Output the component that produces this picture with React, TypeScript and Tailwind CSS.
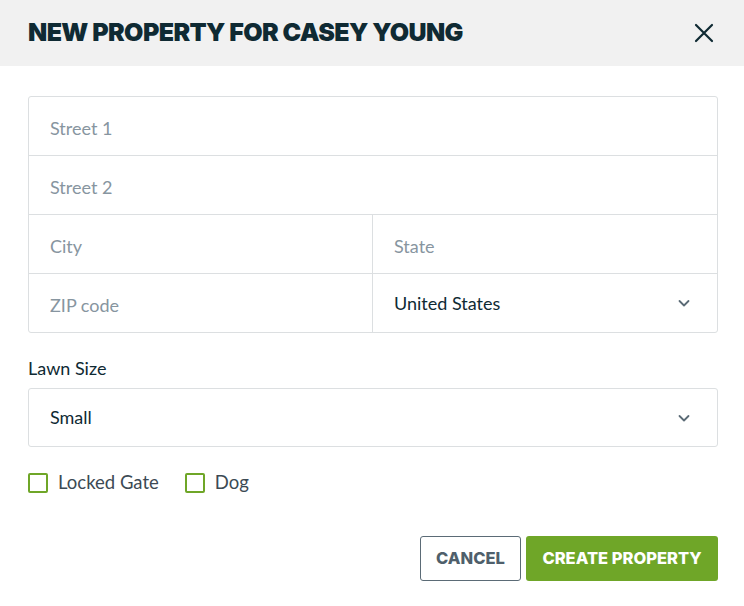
import React, { useState } from 'react';

const body = { fontFamily: 'Lato, "Open Sans", sans-serif' };
const heading = { fontFamily: 'Inter, "Liberation Sans", sans-serif' };

const Chevron = () => (
  <svg width="14" height="14" viewBox="0 0 14 14" fill="none" className="text-[#5b6b76]">
    <path d="M2.5 5l4.5 4.5L11.5 5" stroke="currentColor" strokeWidth="1.8" strokeLinecap="round" strokeLinejoin="round" />
  </svg>
);

const Field = ({ placeholder, className = '' }: { placeholder: string; className?: string }) => (
  <input
    placeholder={placeholder}
    className={`w-full px-[21px] pt-[3px] text-[18px] text-[#0f2a33] placeholder:text-[#8795a0] outline-none bg-transparent ${className}`}
    style={body}
  />
);

const SelectBox = ({ value, className = '' }: { value: string; className?: string }) => (
  <div className={`flex items-center justify-between pl-[21px] pr-[26px] text-[18px] text-[#0f2a33] ${className}`} style={body}>
    <span>{value}</span>
    <Chevron />
  </div>
);

const Check = ({ label }: { label: string }) => {
  const [on, setOn] = useState(false);
  return (
    <label className="flex items-center gap-[10px] cursor-pointer" onClick={() => setOn(!on)}>
      <span className={`w-[20px] h-[20px] rounded-[2px] border-2 border-[#6fa628] ${on ? 'bg-[#6fa628]' : 'bg-white'}`} />
      <span className="text-[18.5px] text-[#3c4a54]" style={body}>{label}</span>
    </label>
  );
};

export default function App() {
  return (
    <div className="w-[744px] h-[606px] bg-white">
      <div className="h-[66px] bg-[#f1f1f1] flex items-center justify-between pl-[28px] pr-[30px]">
        <h1 className="text-[25px] font-black tracking-[-0.6px] text-[#0f2a33]" style={heading}>
          NEW PROPERTY FOR CASEY YOUNG
        </h1>
        <button className="text-[#0f2a33]">
          <svg width="20" height="20" viewBox="0 0 20 20" fill="none">
            <path d="M2 2l16 16M18 2L2 18" stroke="currentColor" strokeWidth="2.2" strokeLinecap="round" />
          </svg>
        </button>
      </div>

      <div className="pl-[28px] pr-[26px] pt-[30px]">
        {/* Address */}
        <div className="border border-[#dcdfe1] rounded-[3px]">
          <Field placeholder="Street 1" className="h-[59px] border-b border-[#dcdfe1]" />
          <Field placeholder="Street 2" className="h-[59px] border-b border-[#dcdfe1]" />
          <div className="grid grid-cols-2">
            <Field placeholder="City" className="h-[59px] border-b border-r border-[#dcdfe1]" />
            <Field placeholder="State" className="h-[59px] border-b border-[#dcdfe1]" />
          </div>
          <div className="grid grid-cols-2">
            <Field placeholder="ZIP code" className="h-[58px] border-r border-[#dcdfe1]" />
            <SelectBox value="United States" className="h-[58px]" />
          </div>
        </div>

        <div className="mt-[22px] text-[18px] text-[#0f2a33]" style={body}>Lawn Size</div>
        <div className="mt-[6px] h-[59px] border border-[#dcdfe1] rounded-[3px]">
          <SelectBox value="Small" className="h-full" />
        </div>

        <div className="mt-[22px] flex items-center gap-[26px]">
          <Check label="Locked Gate" />
          <Check label="Dog" />
        </div>

        <div className="mt-[39px] flex justify-end gap-[5px]">
          <button className="h-[45px] w-[101px] border border-[#5b6b76] rounded-[3px] text-[16.5px] font-extrabold text-[#4f5f6b]" style={heading}>
            CANCEL
          </button>
          <button className="h-[45px] w-[192px] bg-[#6fa628] rounded-[3px] text-[16.5px] font-extrabold text-white" style={heading}>
            CREATE PROPERTY
          </button>
        </div>
      </div>
    </div>
  );
}
